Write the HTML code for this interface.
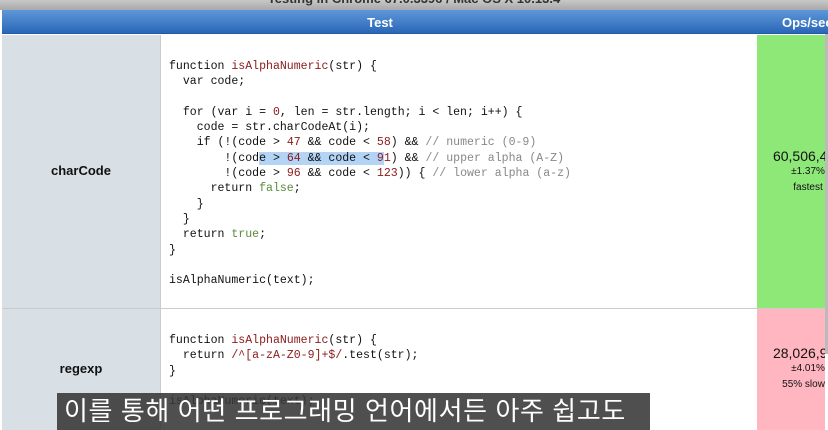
<!DOCTYPE html>
<html><head><meta charset="utf-8"><style>
*{margin:0;padding:0;box-sizing:border-box}
body{width:828px;height:430px;overflow:hidden;background:#fff;font-family:"Liberation Sans",Arial,sans-serif;position:relative}
.top{position:absolute;left:0;top:0;width:828px;height:10px;background:linear-gradient(#c8c8c8,#a8a8a8);overflow:hidden}
.top span{position:absolute;left:0;width:828px;text-align:center;top:-9px;font-weight:bold;font-size:13px;color:#333}
.hdr{position:absolute;left:2px;top:10px;width:826px;height:24px;background:linear-gradient(#5d97d8,#2b67b8);color:#fff;font-weight:bold;font-size:13px;border-bottom:1px solid #1e5aa8}
.hdr .t{position:absolute;left:0;width:756px;text-align:center;top:5px}
.hdr .o{position:absolute;left:780px;top:5px}
.left{position:absolute;left:2px;width:158px;background:#d8dfe5;font-weight:bold;font-size:13px;color:#111;text-align:center}
.code{position:absolute;left:160px;width:597px;border-left:1px solid #ccc;font-family:"Liberation Mono",monospace;font-size:11.55px;line-height:15.3px;color:#111;white-space:pre;padding-left:8px}
.ops{position:absolute;left:757px;width:68px;color:#111;overflow:hidden}
.ops div{width:102px;text-align:center;font-size:14px;white-space:nowrap}
.ops small{display:block;font-size:10px;line-height:16px}
.f{color:#8b1a1a}.n{color:#8b1a1a}.c{color:#888}.b{color:#5a8a3a}.hl{background:#b3d4f5}
.sep{position:absolute;left:2px;width:826px;height:1px;background:#ccc}
.sub{position:absolute;left:57px;top:393px;width:593px;height:37px;background:rgba(55,55,55,.88);color:#fff;font-family:"Liberation Sans","Noto Sans CJK KR",sans-serif;font-size:26px;letter-spacing:0.6px;line-height:37px;padding-left:7px;white-space:nowrap;overflow:hidden}
.scroll{position:absolute;left:825px;top:34px;width:3px;height:320px;background:#bbb}
</style></head><body>
<div class="top"><span>Testing in Chrome 67.0.3396 / Mac OS X 10.13.4</span></div>
<div class="hdr"><span class="t">Test</span><span class="o">Ops/sec</span></div>
<div class="left" style="top:35px;height:273px;line-height:271px">charCode</div>
<div class="code" style="top:35px;height:273px;padding-top:24px">function <span class="f">isAlphaNumeric</span>(str) {
  var code;

  for (var i = <span class="n">0</span>, len = str.length; i &lt; len; i++) {
    code = str.charCodeAt(i);
    if (!(code &gt; <span class="n">47</span> &amp;&amp; code &lt; <span class="n">58</span>) &amp;&amp; <span class="c">// numeric (0-9)</span>
        !(cod<span class="hl">e &gt; <span class="n">64</span> &amp;&amp; code &lt; <span class="n">9</span></span><span class="n">1</span>) &amp;&amp; <span class="c">// upper alpha (A-Z)</span>
        !(code &gt; <span class="n">96</span> &amp;&amp; code &lt; <span class="n">123</span>)) { <span class="c">// lower alpha (a-z)</span>
      return <span class="b">false</span>;
    }
  }
  return <span class="b">true</span>;
}

isAlphaNumeric(text);</div>
<div class="ops" style="top:35px;height:273px;background:#8de878;padding-top:113px"><div>60,506,485<small>±1.37%</small><small>fastest</small></div></div>
<div class="sep" style="top:308px"></div>
<div class="left" style="top:309px;height:121px;line-height:120px">regexp</div>
<div class="code" style="top:309px;height:121px;padding-top:24px">function <span class="f">isAlphaNumeric</span>(str) {
  return <span class="f">/^[a-zA-Z0-9]+$/</span>.test(str);
}

isAlphaNumeric(text);</div>
<div class="ops" style="top:309px;height:121px;background:#ffb6c1;padding-top:36px"><div>28,026,985<small>±4.01%</small><small>55% slower</small></div></div>
<div class="scroll"></div>
<div class="sub">이를 통해 어떤 프로그래밍 언어에서든 아주 쉽고도</div>
</body></html>
